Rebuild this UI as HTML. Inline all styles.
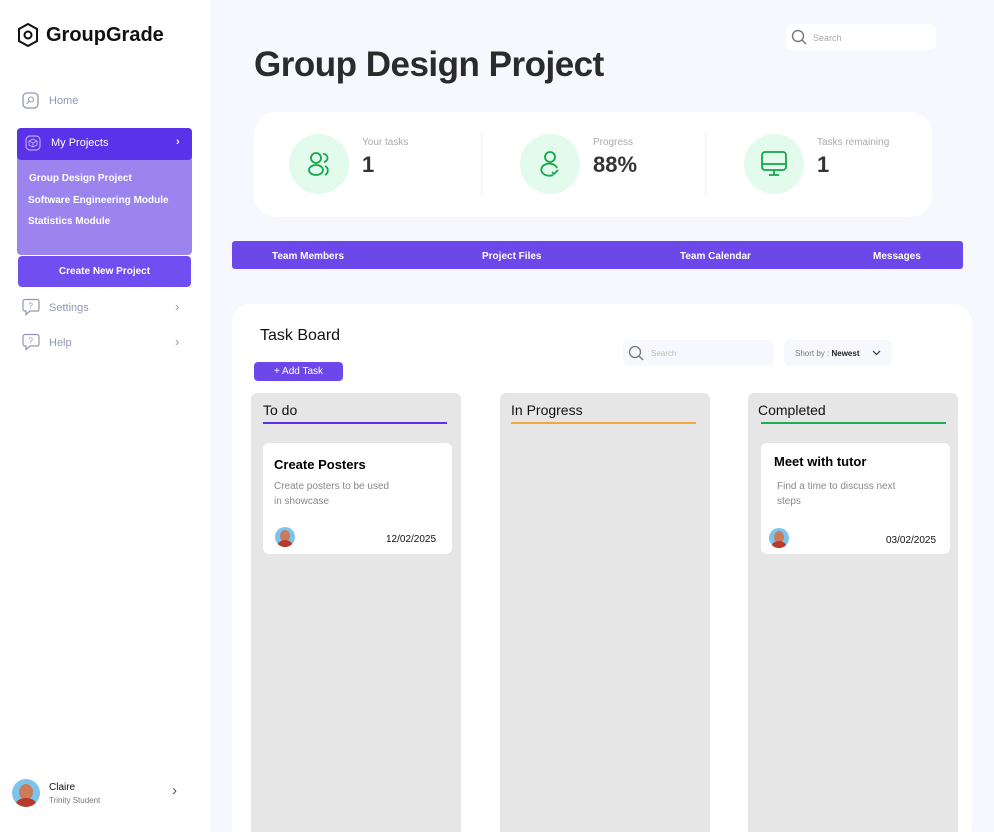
<!DOCTYPE html>
<html style="overflow:hidden;height:832px"><head><style>
*{box-sizing:border-box;margin:0;padding:0}
body{width:994px;height:832px;overflow:hidden;background:#f7f8fe;font-family:"Liberation Sans",sans-serif;position:relative;color:#222}
.a{position:absolute}
.side{left:0;top:0;width:210px;height:832px;background:#fff}
.nav{font-size:11px;color:#9197b3}
.col{background:#e6e6e6;border-radius:6px}
.card{background:#fff;border-radius:6px}
.circ{width:60px;height:60px;border-radius:50%;background:#e3fbec}
.lbl{font-size:10px;color:#aaa}
.num{font-size:22px;font-weight:bold;color:#333}
.tab{color:#fff;font-size:10px;font-weight:bold}
</style></head><body>
<div class="a side">
 <svg class="a" style="left:16px;top:22px" width="24" height="26" viewBox="0 0 24 26"><path d="M12 2 L21 7 V19 L12 24 L3 19 V7 Z" fill="none" stroke="#111" stroke-width="2"/><circle cx="12" cy="13" r="3.5" fill="none" stroke="#111" stroke-width="2"/></svg>
 <div class="a" style="left:46px;top:24px;font-size:20px;font-weight:bold;color:#111">GroupGrade</div>
 <svg class="a" style="left:22px;top:92px" width="17" height="17"><rect x="1" y="1" width="15" height="15" rx="4" fill="none" stroke="#9197b3" stroke-width="1.3"/><circle cx="9" cy="7.5" r="2.5" fill="none" stroke="#9197b3"/><path d="M7 9.5 L4.5 12" stroke="#9197b3"/></svg>
 <div class="a nav" style="left:49px;top:95px">Home</div>
 <div class="a" style="left:17px;top:128px;width:175px;height:127px;background:#9b84ee;border-radius:4px"></div>
 <div class="a" style="left:17px;top:128px;width:175px;height:32px;background:#5932ea;border-radius:4px"></div>
 <svg class="a" style="left:25px;top:135px" width="16" height="16"><rect x="1" y="1" width="14" height="14" rx="4" fill="none" stroke="#b9a8f5" stroke-width="1.2"/><path d="M8 4 L12 6 V10 L8 12 L4 10 V6 Z M4 6 L8 8 L12 6 M8 8 V12" fill="none" stroke="#b9a8f5"/></svg>
 <div class="a" style="left:51px;top:137px;font-size:11px;color:#fff">My Projects</div>
 <div class="a" style="left:176px;top:136px;font-size:11px;color:#fff;font-weight:bold">›</div>
 <div class="a" style="left:29px;top:173px;font-size:10px;color:#fff;font-weight:bold">Group Design Project</div>
 <div class="a" style="left:28px;top:195px;font-size:10px;color:#fff;font-weight:bold">Software Engineering Module</div>
 <div class="a" style="left:28px;top:216px;font-size:10px;color:#fff;font-weight:bold">Statistics Module</div>
 <div class="a" style="left:18px;top:256px;width:173px;height:31px;background:#6f4ff0;border-radius:4px;color:#fff;font-size:10px;font-weight:bold;text-align:center;line-height:31px">Create New Project</div>
 <svg class="a" style="left:22px;top:298px" width="18" height="18"><path d="M3 1.5 H15 A2 2 0 0 1 17 3.5 V11 A2 2 0 0 1 15 13 H8 L4 16.5 V13 H3 A2 2 0 0 1 1 11 V3.5 A2 2 0 0 1 3 1.5Z" fill="none" stroke="#9197b3" stroke-width="1.2"/><text x="6.5" y="10.5" font-size="8" fill="#9197b3" font-family="Liberation Sans">?</text></svg>
 <div class="a nav" style="left:49px;top:302px">Settings</div><div class="a nav" style="left:175px;top:299px;font-size:13px">›</div>
 <svg class="a" style="left:22px;top:333px" width="18" height="18"><path d="M3 1.5 H15 A2 2 0 0 1 17 3.5 V11 A2 2 0 0 1 15 13 H8 L4 16.5 V13 H3 A2 2 0 0 1 1 11 V3.5 A2 2 0 0 1 3 1.5Z" fill="none" stroke="#9197b3" stroke-width="1.2"/><text x="6.5" y="10.5" font-size="8" fill="#9197b3" font-family="Liberation Sans">?</text></svg>
 <div class="a nav" style="left:49px;top:337px">Help</div><div class="a nav" style="left:175px;top:334px;font-size:13px">›</div>
 <div class="a" style="left:12px;top:779px;width:28px;height:28px;border-radius:50%;background:#7cc4ee;overflow:hidden"><div class="a" style="left:7px;top:5px;width:14px;height:16px;border-radius:50%;background:#c97b5a"></div><div class="a" style="left:4px;top:19px;width:20px;height:12px;border-radius:50% 50% 0 0;background:#b83a2a"></div></div>
 <div class="a" style="left:49px;top:782px;font-size:10px;color:#111">Claire</div>
 <div class="a" style="left:49px;top:796px;font-size:8px;color:#777">Trinity Student</div>
 <div class="a" style="left:172px;top:782px;font-size:15px;color:#555">›</div>
</div>
<div class="a" style="left:786px;top:24px;width:150px;height:26px;background:#fff;border-radius:6px"></div>
<svg class="a" style="left:791px;top:29px" width="16" height="16"><circle cx="7" cy="7" r="5.5" fill="none" stroke="#777" stroke-width="1.4"/><path d="M11 11 L15 15" stroke="#777" stroke-width="1.4"/></svg>
<div class="a" style="left:813px;top:33px;font-size:9px;color:#aaa">Search</div>
<div class="a" style="left:254px;top:45px;font-size:35px;font-weight:bold;color:#2b2b2b;letter-spacing:-0.5px">Group Design Project</div>
<div class="a" style="left:254px;top:112px;width:678px;height:105px;background:#fff;border-radius:22px"></div>
<div class="a" style="left:481px;top:133px;width:1px;height:62px;background:#eee"></div>
<div class="a" style="left:705px;top:133px;width:1px;height:62px;background:#eee"></div>
<div class="a circ" style="left:289px;top:134px"></div>
<svg class="a" style="left:303px;top:148px" width="32" height="32" fill="none" stroke="#12a84a" stroke-width="1.8"><circle cx="13" cy="10" r="5"/><ellipse cx="13" cy="22" rx="7" ry="5"/><path d="M20 6 A4 4 0 0 1 21 14 M22 18 A5 5 0 0 1 22 27"/></svg>
<div class="a lbl" style="left:362px;top:137px">Your tasks</div><div class="a num" style="left:362px;top:152px">1</div>
<div class="a circ" style="left:520px;top:134px"></div>
<svg class="a" style="left:535px;top:148px" width="32" height="32" fill="none" stroke="#12a84a" stroke-width="1.8"><circle cx="15" cy="9" r="5"/><path d="M22 20 A8 6 0 1 0 18 27"/><path d="M17 24 L19 26 L23 22"/></svg>
<div class="a lbl" style="left:593px;top:137px">Progress</div><div class="a num" style="left:593px;top:152px">88%</div>
<div class="a circ" style="left:744px;top:134px"></div>
<svg class="a" style="left:758px;top:148px" width="32" height="32" fill="none" stroke="#12a84a" stroke-width="1.8"><rect x="4" y="4" width="24" height="18" rx="3"/><path d="M4 16 H28 M16 22 V27 M11 27 H21"/></svg>
<div class="a lbl" style="left:817px;top:137px">Tasks  remaining</div><div class="a num" style="left:817px;top:152px">1</div>
<div class="a" style="left:232px;top:241px;width:731px;height:28px;background:#6c47ea;border-radius:3px"></div>
<div class="a tab" style="left:272px;top:251px">Team Members</div>
<div class="a tab" style="left:482px;top:251px">Project Files</div>
<div class="a tab" style="left:680px;top:251px">Team Calendar</div>
<div class="a tab" style="left:873px;top:251px">Messages</div>
<div class="a" style="left:232px;top:304px;width:740px;height:540px;background:#fff;border-radius:18px"></div>
<div class="a" style="left:260px;top:327px;font-size:16px;color:#111">Task Board</div>
<div class="a" style="left:254px;top:362px;width:89px;height:19px;background:#6c47ea;border-radius:4px;color:#fff;font-size:10px;text-align:center;line-height:19px">+ Add Task</div>
<div class="a" style="left:623px;top:340px;width:151px;height:26px;background:#f7f8fe;border-radius:6px"></div>
<svg class="a" style="left:628px;top:345px" width="16" height="16"><circle cx="7" cy="7" r="5.5" fill="none" stroke="#777" stroke-width="1.3"/><path d="M11 11 L15 15" stroke="#777" stroke-width="1.3"/></svg>
<div class="a" style="left:651px;top:349px;font-size:8px;color:#bbb">Search</div>
<div class="a" style="left:784px;top:340px;width:108px;height:26px;background:#f7f8fe;border-radius:6px;font-size:8px;color:#777;padding:9px 0 0 11px">Short by : <b style="color:#222">Newest</b></div>
<svg class="a" style="left:872px;top:350px" width="9" height="6"><path d="M1 1 L4.5 4.5 L8 1" fill="none" stroke="#333" stroke-width="1.2"/></svg>
<div class="a col" style="left:251px;top:393px;width:210px;height:450px"></div>
<div class="a col" style="left:500px;top:393px;width:210px;height:450px"></div>
<div class="a col" style="left:748px;top:393px;width:210px;height:450px"></div>
<div class="a" style="left:263px;top:402px;font-size:14px;color:#111">To do</div>
<div class="a" style="left:263px;top:422px;width:184px;height:2px;background:#5932ea"></div>
<div class="a" style="left:511px;top:402px;font-size:14px;color:#111">In Progress</div>
<div class="a" style="left:511px;top:422px;width:185px;height:2px;background:#f0a93b"></div>
<div class="a" style="left:758px;top:402px;font-size:14px;color:#111">Completed</div>
<div class="a" style="left:761px;top:422px;width:185px;height:2px;background:#1eae55"></div>
<div class="a card" style="left:263px;top:443px;width:189px;height:111px"></div>
<div class="a" style="left:274px;top:457px;font-size:13px;font-weight:bold;color:#000">Create Posters</div>
<div class="a" style="left:274px;top:479px;font-size:10px;color:#888;line-height:15px">Create posters to be used<br>in showcase</div>
<div class="a" style="left:386px;top:534px;font-size:10px;color:#111">12/02/2025</div>
<div class="a card" style="left:761px;top:443px;width:189px;height:111px"></div>
<div class="a" style="left:774px;top:454px;font-size:13px;font-weight:bold;color:#000">Meet with tutor</div>
<div class="a" style="left:777px;top:479px;font-size:10px;color:#888;line-height:15px">Find a time to discuss next<br>steps</div>
<div class="a" style="left:886px;top:535px;font-size:10px;color:#111">03/02/2025</div>
<div class="a" style="left:275px;top:527px;width:20px;height:20px;border-radius:50%;background:#7cc4ee;overflow:hidden"><div class="a" style="left:5px;top:3px;width:10px;height:12px;border-radius:50%;background:#c97b5a"></div><div class="a" style="left:3px;top:13px;width:14px;height:9px;border-radius:50% 50% 0 0;background:#b83a2a"></div></div>
<div class="a" style="left:769px;top:528px;width:20px;height:20px;border-radius:50%;background:#7cc4ee;overflow:hidden"><div class="a" style="left:5px;top:3px;width:10px;height:12px;border-radius:50%;background:#c97b5a"></div><div class="a" style="left:3px;top:13px;width:14px;height:9px;border-radius:50% 50% 0 0;background:#b83a2a"></div></div>
</body></html>
